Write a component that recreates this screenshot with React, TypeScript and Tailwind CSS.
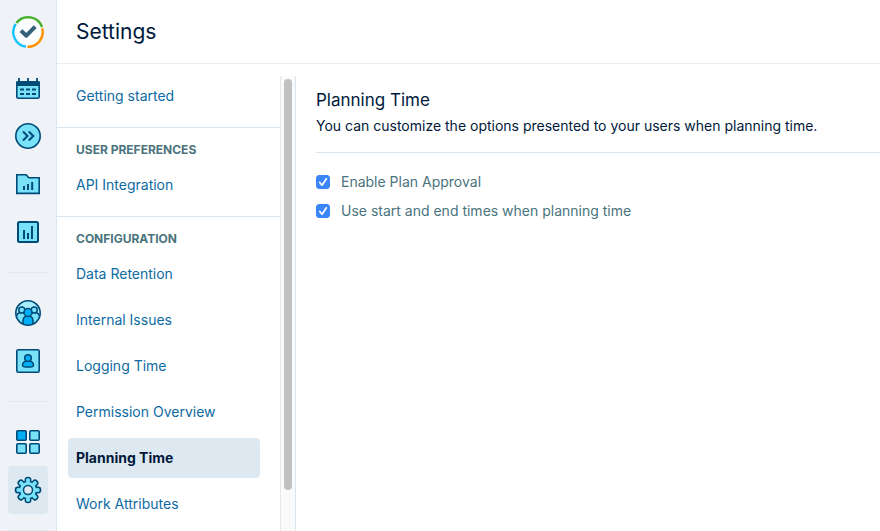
import { ReactNode, useState } from "react";

const INK = "#004A77";
const SKY = "#79E2F9";
const BLUE = "#00AEF8";

const gettingStarted = ["Getting started"];
const userPreferences = ["API Integration"];
const configuration = [
  "Data Retention",
  "Internal Issues",
  "Logging Time",
  "Permission Overview",
  "Planning Time",
  "Work Attributes",
];

function Logo() {
  return (
    <svg width="34" height="34" viewBox="0 0 34 34" fill="none">
      <circle cx="17" cy="17" r="14.7" fill="#FAFCFD" />
      <path d="M5.4 8A14.7 14.7 0 0 1 31 12.2" stroke="#43B02A" strokeWidth="2.4" />
      <path d="M31.2 13.2A14.7 14.7 0 0 1 16.5 31.700" stroke="#FF9100" strokeWidth="2.400" />
      <path d="M15 31.600A14.700 14.700 0 0 1 4.700 9" stroke="#14C3FF" strokeWidth="2.400" />
      <path d="M11.400 17L15.400 20.700L22.800 13" stroke="#34617A" strokeWidth="4" strokeLinejoin="round" strokeLinecap="square" />
    </svg>
  );
}

function CalendarIcon() {
  return (
    <svg width="28" height="28" viewBox="0 0 28 28" fill="none">
      <rect x="2.8" y="7.8" width="22.4" height="16.4" rx="1.5" fill={SKY} stroke={INK} strokeWidth="1.6" />
      <path d="M2 9a2 2 0 0 1 2-2h20a2 2 0 0 1 2 2v3H2z" fill={INK} />
      <path d="M5 4v4M14 4v4M23 4v4" stroke={INK} strokeWidth="1.8" />
      <path d="M6 15.5h4M12 15.5h4M18 15.5h4M6 20h4M12 20h4M18 20h4" stroke={INK} strokeWidth="2" />
    </svg>
  );
}

function ForwardIcon() {
  return (
    <svg width="28" height="28" viewBox="0 0 28 28" fill="none">
      <circle cx="14" cy="14" r="12.2" fill={SKY} stroke={INK} strokeWidth="1.6" />
      <path d="M9 9.5l4.5 4.5L9 18.5M14.8 9.5l4.5 4.5l-4.5 4.5" stroke={INK} strokeWidth="2" />
    </svg>
  );
}

function FolderIcon() {
  return (
    <svg width="28" height="28" viewBox="0 0 28 28" fill="none">
      <path d="M2.8 4.8h9.4l2.6 3h10.4v15.6H2.8z" fill={SKY} stroke={INK} strokeWidth="1.6" />
      <path d="M10 20v-4M14 20v-6M18.2 20v-8" stroke={INK} strokeWidth="2" />
    </svg>
  );
}

function ReportIcon() {
  return (
    <svg width="28" height="28" viewBox="0 0 28 28" fill="none">
      <rect x="4" y="4" width="20" height="20" rx="1.5" fill={SKY} stroke={INK} strokeWidth="2" />
      <path d="M10 21v-9M14 21v-6M18 21V8" stroke={INK} strokeWidth="2" />
    </svg>
  );
}

function TeamIcon() {
  return (
    <svg width="28" height="28" viewBox="0 0 28 28" fill="none" stroke={INK} strokeWidth="1.5">
      <clipPath id="team-ring">
        <circle cx="14" cy="14" r="12" />
      </clipPath>
      <circle cx="14" cy="14" r="12" fill="#A8EDFB" stroke="none" />
      <g clipPath="url(#team-ring)">
        <path d="M2 20c0-4 2-6.5 5.5-6.5S13 16 13 20v7H2zM15 20c0-4 2-6.5 5.5-6.5S26 16 26 20v7H15z" fill={SKY} />
        <circle cx="7.8" cy="11" r="3" fill={SKY} />
        <circle cx="20.2" cy="11" r="3" fill={SKY} />
        <path d="M9 27v-5c0-3.5 2-5 5-5s5 1.5 5 5v5z" fill={BLUE} />
        <circle cx="14" cy="13.5" r="4" fill={BLUE} />
      </g>
      <circle cx="14" cy="14" r="12.2" strokeWidth="1.6" />
    </svg>
  );
}

function AccountIcon() {
  return (
    <svg width="28" height="28" viewBox="0 0 28 28" fill="none" stroke={INK}>
      <rect x="2.8" y="2.8" width="22.4" height="22.4" rx="1.5" fill={SKY} strokeWidth="1.6" />
      <path d="M12 14c-2.6.8-3.500 2.400-3.500 4.500 0 1.200 1.500 1.600 5.500 1.600s5.500-.4 5.500-1.600c0-2.100-.9-3.700-3.500-4.500z" fill={BLUE} strokeWidth="1.5" />
      <circle cx="14" cy="11" r="3.300" fill={BLUE} strokeWidth="1.5" />
    </svg>
  );
}

function AppsIcon() {
  return (
    <svg width="28" height="28" viewBox="0 0 28 28" fill={SKY} stroke={INK} strokeWidth="1.6">
      <rect x="2.8" y="2.8" width="9.4" height="9.4" rx="1" fill={BLUE} />
      <rect x="15.8" y="2.8" width="9.4" height="9.4" rx="1" />
      <rect x="2.8" y="15.8" width="9.4" height="9.4" rx="1" />
      <rect x="15.8" y="15.8" width="9.4" height="9.4" rx="1" />
    </svg>
  );
}

function GearIcon() {
  // One tooth, repeated around the hub every 45 degrees
  const tooth = "M-2.6-8V-10.500a2.600 2 0 0 1 5.200 0V-8z";
  const angles = [0, 45, 90, 135, 180, 225, 270, 315];
  return (
    <svg width="28" height="28" viewBox="-14 -14 28 28">
      <g fill={SKY} stroke={INK} strokeWidth="1.6">
        {angles.map((a) => (
          <path key={a} d={tooth} transform={`rotate(${a})`} />
        ))}
        <circle r="8.8" />
      </g>
      <g fill={SKY}>
        {angles.map((a) => (
          <rect key={a} x="-1.8" y="-10.5" width="3.6" height="4" transform={`rotate(${a})`} />
        ))}
      </g>
      <circle r="4.5" fill="#DEE8F0" stroke={INK} strokeWidth="1.5" />
    </svg>
  );
}

function RailButton({ label, active, children }: { label: string; active?: boolean; children: ReactNode }) {
  return (
    <button
      aria-label={label}
      className={`flex h-12 w-10 shrink-0 items-center justify-center rounded ${active ? "bg-[#dee8f0]" : ""}`}
    >
      {children}
    </button>
  );
}

function RailDivider() {
  return <div className="my-4 h-px w-10 shrink-0 bg-[#dde8f1]" />;
}

interface NavSectionProps {
  title?: string;
  items: string[];
  current: string;
  onSelect: (item: string) => void;
}

function NavSection({ title, items, current, onSelect }: NavSectionProps) {
  return (
    <section className="border-b border-[#dbe7f0] pb-[5px] last:border-b-0">
      {title && (
        <h2 className="px-[19px] pt-[13px] pb-[7px] text-xs leading-[17px] font-bold text-[#4a747d] uppercase">{title}</h2>
      )}
      <ul className="pr-5 pl-[11px]">
        {items.map((item) => (
          <li key={item} className="pb-1.5">
            <a
              href="#"
              onClick={() => onSelect(item)}
              className={`flex h-10 items-center rounded px-2 text-sm ${
                item === current ? "bg-[#dee8f0] font-bold text-[#00193b]" : "text-[#0d6ba3]"
              }`}
            >
              {item}
            </a>
          </li>
        ))}
      </ul>
    </section>
  );
}

function Option({ label }: { label: string }) {
  const [checked, setChecked] = useState<boolean>(true);

  return (
    <label className="flex items-center gap-[11px] text-sm text-[#4a747d]">
      <span className="grid size-3.5 shrink-0">
        <input
          type="checkbox"
          checked={checked}
          onChange={(e) => setChecked(e.target.checked)}
          className="col-start-1 row-start-1 size-3.5 appearance-none rounded-[3px] border border-gray-400 checked:border-[#3b86f7] checked:bg-[#3b86f7]"
        />
        {checked && (
          <svg viewBox="0 0 14 14" fill="none" className="pointer-events-none col-start-1 row-start-1 size-3.5">
            <path d="M3.8 7.5L6 10.2L10.4 3.8" stroke="white" strokeWidth="1.7" strokeLinecap="round" strokeLinejoin="round" />
          </svg>
        )}
      </span>
      {label}
    </label>
  );
}

export default function App() {
  const [current, setCurrent] = useState<string>("Planning Time");

  return (
    <div className="flex h-screen overflow-hidden bg-white font-[Inter,sans-serif] text-[#00193b]">
      {/* Icon rail */}
      <aside className="flex w-[57px] shrink-0 flex-col items-center overflow-hidden border-r border-[#dbe7f0] bg-[#eff3f7] pt-2">
        <a href="#" aria-label="Home" className="mb-2 flex h-12 shrink-0 items-center justify-center">
          <Logo />
        </a>
        <RailButton label="Calendar"><CalendarIcon /></RailButton>
        <RailButton label="Expand"><ForwardIcon /></RailButton>
        <RailButton label="Saved reports"><FolderIcon /></RailButton>
        <RailButton label="Reports"><ReportIcon /></RailButton>
        <RailDivider />
        <RailButton label="Teams"><TeamIcon /></RailButton>
        <RailButton label="Accounts"><AccountIcon /></RailButton>
        <RailDivider />
        <RailButton label="Apps"><AppsIcon /></RailButton>
        <RailButton label="Settings" active><GearIcon /></RailButton>
        <RailDivider />
      </aside>

      <div className="flex min-w-0 flex-1 flex-col">
        <header className="flex h-16 shrink-0 items-center border-b border-[#e9edf0] px-[19px]">
          <h1 className="text-[21px]">Settings</h1>
        </header>

        <div className="flex min-h-0 flex-1 pt-3">
          {/* Settings menu */}
          <nav className="w-[223px] shrink-0 overflow-hidden">
            <NavSection items={gettingStarted} current={current} onSelect={setCurrent} />
            <NavSection title="User preferences" items={userPreferences} current={current} onSelect={setCurrent} />
            <NavSection title="Configuration" items={configuration} current={current} onSelect={setCurrent} />
          </nav>
          <div className="w-4 shrink-0 border-r border-l border-r-[#dbe7f0] border-l-[#e6e6e6] bg-[#fafafa] px-[3px] pt-[3px]">
            <div className="h-[91%] w-2 rounded-full bg-[#c1c1c1]" />
          </div>

          <main className="min-w-0 flex-1 pt-3 pl-5">
            <h2 className="text-[17px] leading-6">Planning Time</h2>
            <p className="border-b border-[#dbe7f0] pt-1 pb-4 text-sm">
              You can customize the options presented to your users when planning time.
            </p>
            <div className="flex flex-col gap-[9px] pt-[19px]">
              <Option label="Enable Plan Approval" />
              <Option label="Use start and end times when planning time" />
            </div>
          </main>
        </div>
      </div>
    </div>
  );
}
